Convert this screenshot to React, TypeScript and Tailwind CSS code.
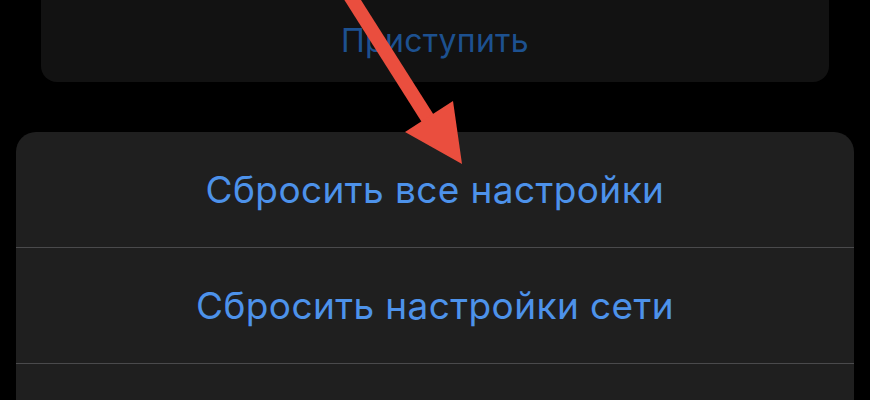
import React from "react";

const rows = ["Сбросить все настройки", "Сбросить настройки сети", ""];

export default function App() {
  return (
    <div
      className="relative w-[870px] h-[400px] overflow-hidden bg-black"
      style={{ fontFamily: "Inter, 'Liberation Sans', sans-serif" }}
    >
      <div className="mx-[41px] h-[82px] rounded-b-[16px] bg-[#121212] flex items-center justify-center">
        <span className="text-[32px] text-[#1d5190] tracking-[0.3px]">Приступить</span>
      </div>

      <div className="mx-[16px] mt-[50px] rounded-t-[20px] bg-[#1f1f1f]">
        {rows.map((label, i) => (
          <div
            key={i}
            className={
              i < 2
                ? "h-[116px] flex items-center justify-center border-b border-[#4a4a4c]"
                : "h-[60px]"
            }
          >
            <span className="text-[37px] text-[#4d92ea] tracking-[0.4px]">{label}</span>
          </div>
        ))}
      </div>

      {/* red annotation arrow */}
      <svg
        className="absolute left-0 top-0 pointer-events-none"
        width="870"
        height="400"
        viewBox="0 0 870 400"
      >
        <line x1="340" y1="-20" x2="430" y2="122" stroke="#ea4e3e" strokeWidth="14" />
        <polygon points="405,132 453,101 462,164" fill="#ea4e3e" />
      </svg>
    </div>
  );
}
